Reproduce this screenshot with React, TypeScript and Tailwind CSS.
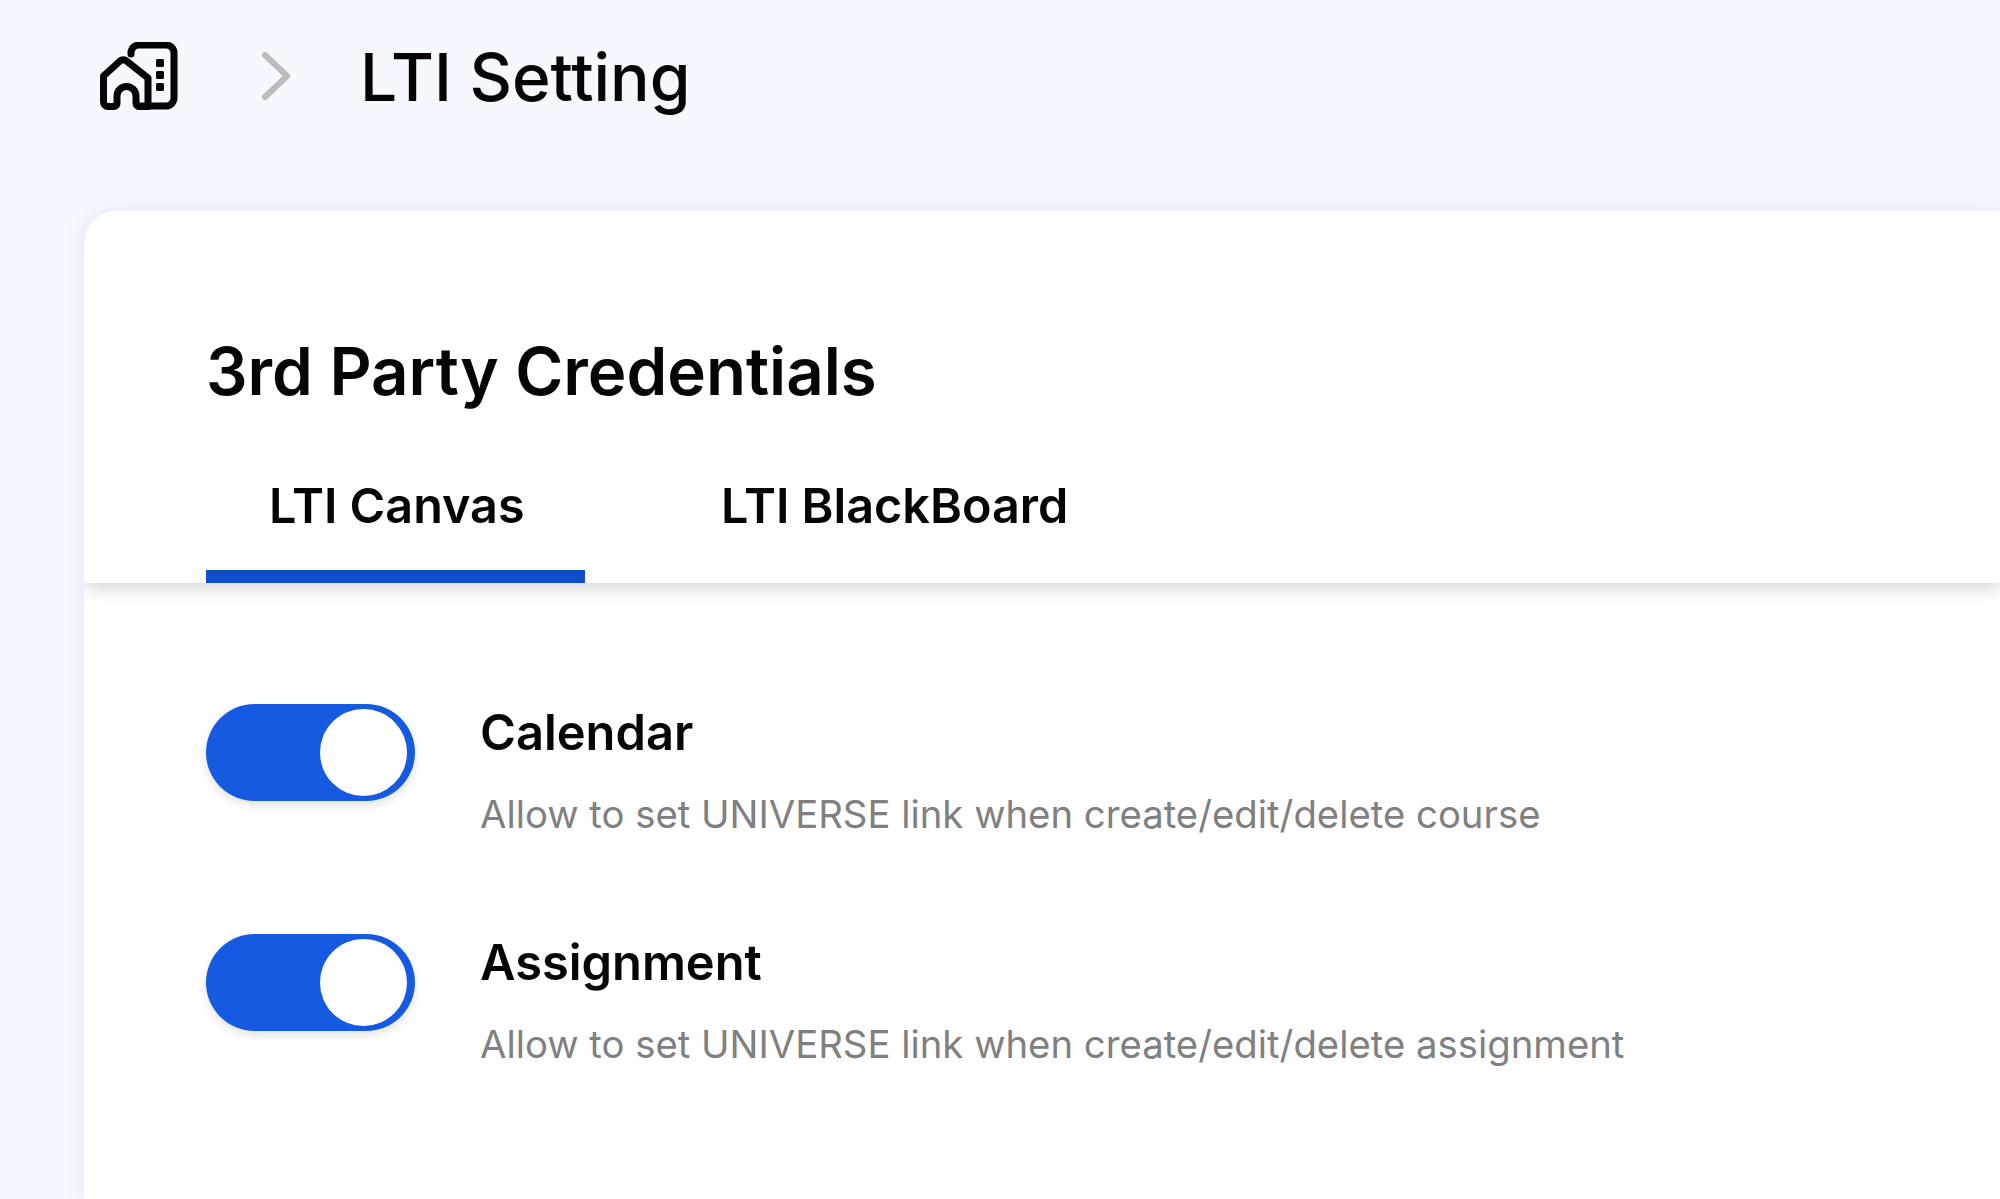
export default function App() {
  const rows = [
    { t: "Calendar", d: "Allow to set UNIVERSE link when create/edit/delete course" },
    { t: "Assignment", d: "Allow to set UNIVERSE link when create/edit/delete assignment" },
  ];
  return (
    <div className="h-[1199px] w-[2000px] overflow-hidden bg-[#f5f8ff] font-['Inter',sans-serif] text-[#050505]">
      <div className="flex h-[211px] items-start pl-[100px] pt-[42px]">
        <svg width="78" height="68" viewBox="0 0 78 68" fill="none" stroke="#050505" strokeWidth="7" strokeLinejoin="round" strokeLinecap="round" className="shrink-0">
          <path d="M31 12v-1a8 8 0 0 1 8-8h27a8 8 0 0 1 8 8v45a8 8 0 0 1-8 8H39" />
          <path d="M3.5 34 20 19a5 5 0 0 1 6.500 0L48 36v28.500H39a3 3 0 0 1-3-3V54a9.500 9.500 0 0 0-19 0v7.500a3 3 0 0 1-3 3H8a4.500 4.500 0 0 1-4.500-4.500V34Z" />
          <rect x="56" y="17" width="8" height="8" rx="1.500" fill="#050505" stroke="none" />
          <rect x="56" y="29" width="8" height="8" rx="1.500" fill="#050505" stroke="none" />
          <rect x="56" y="41" width="8" height="8" rx="1.500" fill="#050505" stroke="none" />
        </svg>
        <svg width="30" height="48" viewBox="0 0 30 48" fill="none" stroke="#bcbcbc" strokeWidth="6" strokeLinecap="round" strokeLinejoin="round" className="ml-[83px] mt-[10px] shrink-0">
          <path d="M4 3 26 24 4 45" />
        </svg>
        <div className="-mt-[1px] ml-[69px] text-[65.800px] leading-[72px] font-medium whitespace-nowrap">LTI Setting</div>
      </div>
      <div className="ml-[84px] h-[988px] overflow-hidden rounded-tl-[32px] bg-white shadow-[0_0_20px_rgba(120,130,180,0.14)]">
        <div className="h-[372px] rounded-tl-[32px] pl-[122px] shadow-[0_6px_18px_rgba(0,0,0,0.16)]">
          <h1 className="pt-[127px] text-[65.400px] leading-[68px] font-semibold whitespace-nowrap">3rd Party Credentials</h1>
          <div className="mt-[72px] flex">
            <div className="h-[105px] w-[379px] border-b-[13px] border-[#0f4dcb] pl-[63px] text-[48.500px] leading-[56px] font-semibold">LTI Canvas</div>
            <div className="ml-[136px] text-[48.500px] leading-[56px] font-semibold">LTI BlackBoard</div>
          </div>
        </div>
        <div className="flex flex-col gap-[132px] pl-[122px] pt-[121px]">
          {rows.map((r) => (
            <div key={r.t} className="flex h-[98px] items-start">
              <div className="flex h-[97px] w-[209px] shrink-0 items-center justify-end rounded-full bg-[#175ae2] pr-[8px] shadow-[0_4px_10px_rgba(0,0,0,0.12)]">
                <div className="h-[87px] w-[87px] rounded-full bg-white" />
              </div>
              <div className="ml-[65px]">
                <div className="mt-[1px] text-[48.800px] leading-[56px] font-semibold whitespace-nowrap">{r.t}</div>
                <div className="mt-[31px] text-[38.300px] leading-[44px] text-[#808080] whitespace-nowrap">{r.d}</div>
              </div>
            </div>
          ))}
        </div>
      </div>
    </div>
  );
}
